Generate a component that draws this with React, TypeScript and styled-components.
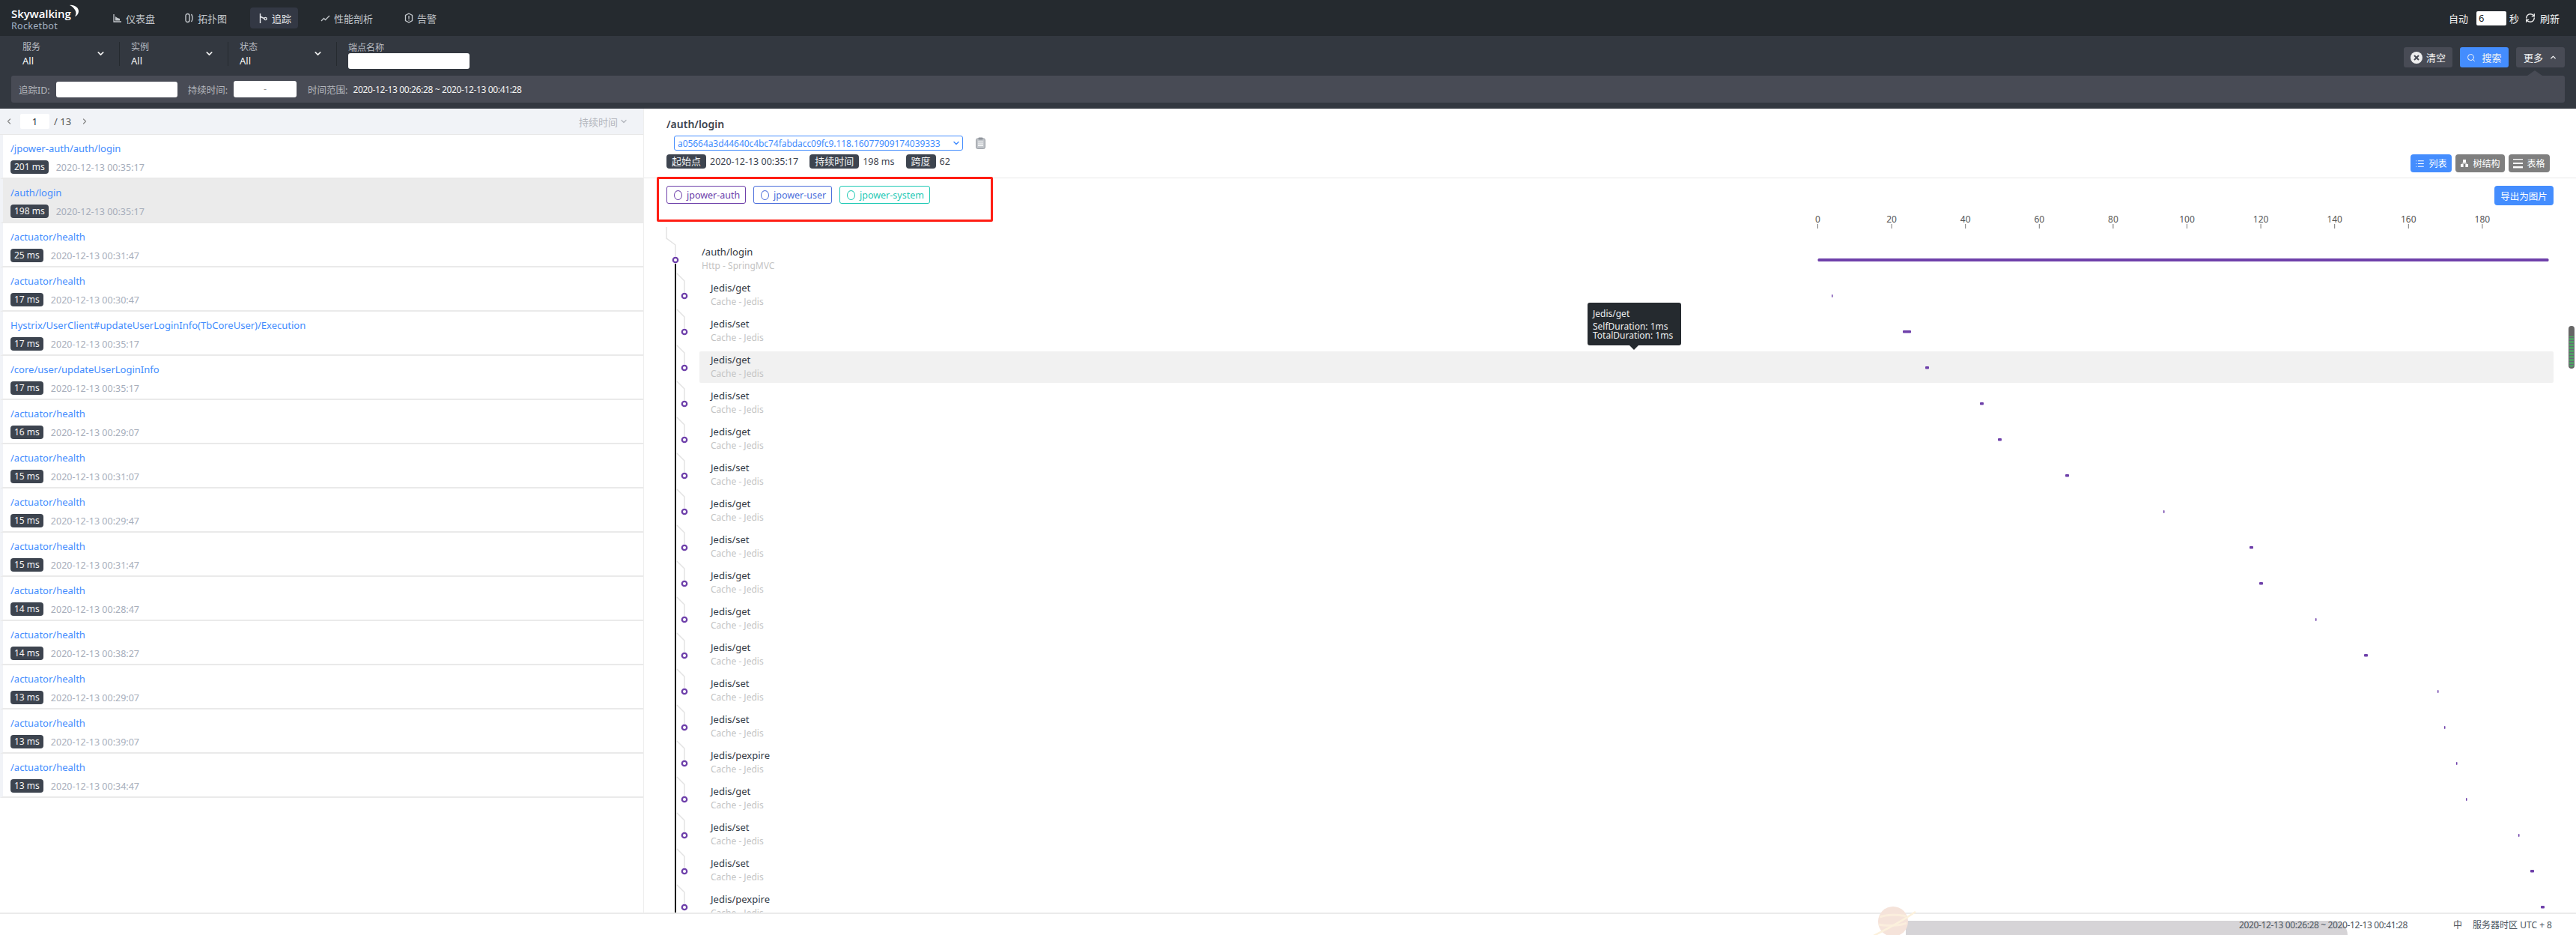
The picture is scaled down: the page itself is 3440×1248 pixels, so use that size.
import React from "react";
import styled, { createGlobalStyle } from "styled-components";
import { Search, RefreshCw, ChevronDown, ChevronUp, ChevronLeft, ChevronRight, List } from "lucide-react";

const Global = createGlobalStyle`
  html, body { margin: 0; padding: 0; background: #fff; }
  * { box-sizing: border-box; }
  body { font-family: "Noto Sans", "Noto Sans CJK SC", sans-serif; font-size: 12px; }
`;

const Page = styled.div`
  width: 3440px; height: 1248px; display: flex; flex-direction: column; overflow: hidden; position: relative; color: #333;
`;

/* ---------- nav ---------- */
const Nav = styled.header`
  height: 48px; flex: none; background: #252a2f; display: flex; align-items: center; padding: 0 22px 0 15px; color: #c3c7cc;
`;
const Logo = styled.div`
  width: 121px; flex: none; display: flex; flex-direction: column; position: relative; margin-top: 2px;
`;
const LogoMain = styled.span`
  font-family: "Open Sans", sans-serif; font-size: 15px; line-height: 19px; font-weight: 600; color: #fff; letter-spacing: -.1px;
`;
const LogoSub = styled.span`
  font-size: 12.5px; line-height: 14px; color: #a4b3c4; letter-spacing: .3px;
`;
const Crescent = styled.svg`
  position: absolute; left: 77px; top: -3px;
`;
const NavItems = styled.nav`
  display: flex; align-items: center; flex: 1; margin-left: 4px;
`;
const NavItem = styled.a<{ $active?: boolean; $w: number }>`
  width: ${p => p.$w}px; height: 28px; display: flex; align-items: center; gap: 5px; padding-left: 11px; font-size: 13px; border-radius: 4px; flex: none;
  margin-right: ${p => (p.$active ? 19 : 0)}px;
  background: ${p => (p.$active ? "#333844" : "transparent")};
  color: ${p => (p.$active ? "#e8eaed" : "#c3c7cc")};
`;
const AutoBox = styled.div`
  display: flex; align-items: center; font-size: 13px; color: #f2f2f2;
`;
const AutoInput = styled.div`
  width: 40px; height: 19px; margin: 0 4px 0 11px; background: #fff; border-radius: 2px; color: #222; padding-left: 3px; line-height: 19px; font-size: 13px;
`;
const Refresh = styled.span`
  display: flex; align-items: center; gap: 6px; margin-left: 8px;
`;

/* ---------- toolbar ---------- */
const Toolbar = styled.section`
  height: 97px; flex: none; background: #333840; display: flex; flex-direction: column; color: #efefef;
`;
const FilterRow = styled.div`
  height: 53px; flex: none; display: flex; padding: 8px 15px 0 15px; align-items: flex-start;
`;
const FilterCol = styled.div`
  width: 145px; height: 32px; border-right: 1px solid #252a2f; padding-left: 15px; position: relative; display: flex; flex-direction: column; flex: none;
`;
const FilterLabel = styled.span`
  font-size: 12px; line-height: 14px; color: #b9bcc2;
`;
const FilterValue = styled.span`
  font-size: 13px; line-height: 20px; margin-top: 1px; color: #f3f3f3;
`;
const FilterChevron = styled.span`
  position: absolute; right: 18px; top: 9px; color: #eee; display: flex;
`;
const EndpointCol = styled.div`
  margin-left: 15px; display: flex; flex-direction: column; margin-top: 1px;
`;
const WhiteInput = styled.div<{ $w: number; $h?: number }>`
  width: ${p => p.$w}px; height: ${p => p.$h ?? 21}px; background: #fff; border-radius: 3px; color: #999; text-align: center; line-height: 22px;
`;
const ToolButtons = styled.div`
  margin-left: auto; display: flex; gap: 10px; margin-top: 7px;
`;
const ToolButton = styled.button<{ $bg: string; $gap: number }>`
  width: 65px; height: 27px; border: 0; border-radius: 3px; background: ${p => p.$bg}; color: #f4f4f4; display: flex; align-items: center; justify-content: center; gap: ${p => p.$gap}px; font: inherit; font-size: 13px; padding: 0;
`;
const ClearDot = styled.svg`flex: none;`;
const SubBar = styled.div`
  height: 36px; margin: 0 15px; background: #484b55; border-radius: 3px; display: flex; align-items: center; position: relative; padding-left: 10px; font-size: 12.5px;
  &::after {
    content: ""; position: absolute; right: 30px; top: -7px;
    border-left: 10px solid transparent; border-right: 10px solid transparent; border-bottom: 7px solid #484b55;
  }
`;
const SubLabel = styled.span<{ $ml?: number }>`
  color: #b4b6bc; margin-left: ${p => p.$ml ?? 0}px; margin-right: 8px; font-size: 12.5px;
`;
const SubInput = styled(WhiteInput)`margin-right: 0;`;
const TimeRange = styled.span`
  font-size: 12px; color: #f2f2f2; margin-left: -1px; letter-spacing: -.36px;
`;

/* ---------- main ---------- */
const Main = styled.main`
  flex: 1; display: flex; min-height: 0;
`;
const ListPane = styled.aside`
  width: 860px; flex: none; border-right: 1px solid #eee; display: flex; flex-direction: column;
`;
const Pager = styled.div`
  height: 35px; flex: none; background: #f1f3f7; display: flex; align-items: center; color: #666; padding: 0 20px 0 6px; border-bottom: 1px solid #e8e8e8;
`;
const PageInput = styled.div`
  width: 39px; height: 20px; background: #fff; border-radius: 2px; margin: 0 6px 0 9px; text-align: center; font-size: 13px; line-height: 20px; color: #333;
`;
const PageCount = styled.span`
  font-size: 13px; margin-right: 12px; color: #555;
`;
const SortBy = styled.span`
  margin-left: auto; display: flex; align-items: center; gap: 2px; color: #b3b6bd; font-size: 13px;
`;
const TraceItem = styled.div<{ $active?: boolean }>`
  height: 59px; flex: none; padding: 9px 0 0 10px; border-left: 4px solid #f1f3f7; border-bottom: 2px solid #eaeaea;
  background: ${p => (p.$active ? "#ebebeb" : "#fff")};
`;
const TraceLink = styled.div`
  font-size: 13px; line-height: 19px; color: #448dfe;
`;
const TraceMeta = styled.div`
  display: flex; align-items: center; gap: 10px; margin-top: 6px;
`;
const Tag = styled.span`
  background: #3d444f; color: #f5f5f5; border-radius: 4px; font-size: 12px; height: 18px; line-height: 18px; padding: 0 5px; flex: none;
`;
const MetaTag = styled(Tag)`
  font-size: 13px; height: 19px; line-height: 19px; padding: 0 7px;
`;
const TraceTime = styled.span`
  color: #a7aebb; font-size: 12.5px;
`;

const DetailPane = styled.div`
  flex: 1; min-width: 0; display: flex; flex-direction: column;
`;
const DetailHead = styled.div`
  height: 93px; flex: none; padding: 11px 35px 0 30px; border-bottom: 1px solid #e8e8e8; position: relative;
`;
const DetailTitle = styled.div`
  font-size: 14px; line-height: 20px; font-weight: 600; color: #3d444f;
`;
const IdRow = styled.div`
  display: flex; align-items: center; margin: 5px 0 0 10px; gap: 17px;
`;
const IdSelect = styled.div`
  width: 386px; height: 20px; border: 1px solid #448dfe; border-radius: 3px; color: #448dfe; display: flex; align-items: center; justify-content: space-between; padding: 0 2px 0 4px; font-size: 12px; letter-spacing: -.06px; white-space: nowrap;
`;
const MetaRow = styled.div`
  display: flex; align-items: center; margin-top: 5px; height: 19px;
`;
const MetaValue = styled.span`
  font-size: 12.5px; color: #3d444f; margin: 0 15px 0 5px;
`;
const ViewButtons = styled.div`
  position: absolute; right: 35px; top: 61px; display: flex; gap: 5px;
`;
const ViewButton = styled.button<{ $active?: boolean; $w: number }>`
  width: ${p => p.$w}px; height: 24px; border: 0; border-radius: 4px; padding: 0; background: ${p => (p.$active ? "#448dfe" : "#7f7f7f")}; color: #fff; display: flex; align-items: center; justify-content: center; gap: 5px; font: inherit; font-size: 12px;
`;
const ChipRow = styled.div`
  height: 47px; flex: none; display: flex; align-items: flex-start; gap: 10px; padding: 10px 30px 0 30px; position: relative;
`;
const Chip = styled.span<{ $c: string; $w: number }>`
  width: ${p => p.$w}px; height: 24px; border: 1px solid ${p => p.$c}; color: ${p => p.$c}; border-radius: 3px; display: flex; align-items: center; padding-left: 9px; gap: 6px; font-size: 12.5px; background: #fff; flex: none;
`;
const ChipRing = styled.i<{ $c: string }>`
  width: 11px; height: 13px; border: 1.5px solid ${p => p.$c}; border-radius: 50%; flex: none; display: block;
`;
const RedBox = styled.div`
  position: absolute; left: 17px; top: -2px; width: 449px; height: 60px; border: 3px solid #ff1e14; border-radius: 2px; pointer-events: none;
`;
const ExportButton = styled.button`
  margin-left: auto; width: 79px; height: 26px; border: 0; border-radius: 4px; background: #448dfe; color: #fff; font: inherit; font-size: 12.5px; padding: 0; flex: none;
`;
const Tree = styled.div`
  flex: 1; position: relative; overflow: hidden; padding-top: 40px; min-height: 0;
`;
const ChartLayer = styled.svg`
  position: absolute; left: 0; top: 0; pointer-events: none; overflow: visible;
`;
const SpanRow = styled.div<{ $hl?: boolean; $indent: number }>`
  margin: 0 30px 6px 74px; height: 42px; padding: 1px 0 0 ${p => p.$indent}px; border-radius: 2px; flex: none;
  background: ${p => (p.$hl ? "#f1f1f1" : "transparent")};
`;
const SpanName = styled.div`
  font-size: 13px; line-height: 20px; color: #333a45;
`;
const SpanType = styled.div`
  font-size: 12px; line-height: 17px; color: #c4c4c4;
`;
const Tooltip = styled.div`
  position: absolute; left: 1260px; top: 119px; width: 125px; height: 57px; background: #252a2f; color: #eee; border-radius: 3px; padding: 6px 7px; font-size: 12px; line-height: 12px;
  &::after {
    content: ""; position: absolute; left: 56px; bottom: -6px;
    border-left: 6px solid transparent; border-right: 6px solid transparent; border-top: 6px solid #252a2f;
  }
`;
const TipTitle = styled.div`line-height: 18px; margin-bottom: 2px;`;

/* ---------- footer ---------- */
const Footer = styled.footer`
  height: 30px; flex: none; border-top: 2px solid #ebebeb; display: flex; align-items: center; justify-content: flex-end; padding-right: 32px; position: relative; font-size: 12px; color: #4c5560; background: #fff;
`;
const GreyStrip = styled.div`
  position: absolute; left: 2545px; top: 9px; width: 590px; height: 19px; background: #d6d4d7; border-top-right-radius: 18px 19px;
`;
const Planet = styled.svg`
  position: absolute; left: 2498px; top: -10px;
`;
const FooterText = styled.span<{ $mr?: number; $tight?: boolean }>`
  position: relative; margin-right: ${p => p.$mr ?? 0}px; letter-spacing: ${p => (p.$tight ? "-.36px" : "0")};
`;
const ScrollWidget = styled.div`
  position: absolute; left: 3430px; top: 435px; width: 8px; height: 57px; border-radius: 4px; background: #666; padding: 14px 1px 2px;
`;
const ScrollFill = styled.div`
  height: 100%; border-radius: 0 0 3px 3px;
  background: repeating-linear-gradient(to bottom, #46b65c 0 1px, #667 1px 2px);
`;

/* ---------- icons ---------- */
const DashIcon = () => (
  <svg width="12" height="12" viewBox="0 0 12 12" fill="none"><path d="M1 1v10h10" stroke="#c3c7cc" strokeWidth="1.3" /><path d="M3 9.5V4l3 2 3 1v2.5z" fill="#c3c7cc" /></svg>
);
const TopoIcon = () => (
  <svg width="12" height="14" viewBox="0 0 12 14" fill="none" stroke="#c3c7cc" strokeWidth="1.4"><rect x="1" y="1.5" width="5" height="11" rx="2.5" /><path d="M8.5 2c2 2.5 2 7.5 0 10" /></svg>
);
const TraceIcon = () => (
  <svg width="13" height="15" viewBox="0 0 13 15" fill="none" stroke="#e8eaed" strokeWidth="1.4"><path d="M2.5 1v13M2.5 5l5 2.5" /><circle cx="9.5" cy="8" r="1.6" /></svg>
);
const PerfIcon = () => (
  <svg width="13" height="11" viewBox="0 0 13 11" fill="none" stroke="#c3c7cc" strokeWidth="1.3"><path d="M1 9l3.5-3.5 2 2L12 2" /></svg>
);
const AlertIcon = () => (
  <svg width="12" height="14" viewBox="0 0 12 14" fill="none" stroke="#c3c7cc" strokeWidth="1.3"><path d="M6 1l4.5 2.5v7L6 13l-4.5-2.5v-7z" /><path d="M6 4v4M6 9.2v1.2" /></svg>
);
const ClipIcon = () => (
  <svg width="13" height="16" viewBox="0 0 13 16" fill="none"><rect x=".7" y="2" width="11.6" height="13.3" rx="1.5" fill="#c2c6cb" stroke="#8f949b" /><rect x="3.5" y=".5" width="6" height="3" rx="1" fill="#8f949b" /><path d="M3 6.5h7M3 9h7M3 11.5h7" stroke="#fff" /></svg>
);
const TreeIcon = () => (
  <svg width="12" height="12" viewBox="0 0 12 12" fill="#fff"><rect x="4" y="1" width="4" height="4" /><rect x="1" y="7" width="3.6" height="4" /><rect x="7.4" y="7" width="3.6" height="4" /><path d="M2.5 6h7" stroke="#fff" /></svg>
);
const TableIcon = () => (
  <svg width="13" height="14" viewBox="0 0 13 14" fill="#fff"><rect y="1" width="13" height="1.3" /><rect y="6" width="13" height="2" /><rect y="11" width="13" height="2.4" /></svg>
);

/* ---------- data ---------- */
const traces: [string, number, string][] = [
  ["/jpower-auth/auth/login", 201, "00:35:17"],
  ["/auth/login", 198, "00:35:17"],
  ["/actuator/health", 25, "00:31:47"],
  ["/actuator/health", 17, "00:30:47"],
  ["Hystrix/UserClient#updateUserLoginInfo(TbCoreUser)/Execution", 17, "00:35:17"],
  ["/core/user/updateUserLoginInfo", 17, "00:35:17"],
  ["/actuator/health", 16, "00:29:07"],
  ["/actuator/health", 15, "00:31:07"],
  ["/actuator/health", 15, "00:29:47"],
  ["/actuator/health", 15, "00:31:47"],
  ["/actuator/health", 14, "00:28:47"],
  ["/actuator/health", 14, "00:38:27"],
  ["/actuator/health", 13, "00:29:07"],
  ["/actuator/health", 13, "00:39:07"],
  ["/actuator/health", 13, "00:34:47"],
];

// [name, bar x on page, bar width]
const spans: [string, number, number][] = [
  ["Jedis/get", 2446, 1.5], ["Jedis/set", 2541, 11], ["Jedis/get", 2571, 5], ["Jedis/set", 2644, 5],
  ["Jedis/get", 2668, 5], ["Jedis/set", 2758, 5], ["Jedis/get", 2889, 1.5], ["Jedis/set", 3004, 5],
  ["Jedis/get", 3017, 5], ["Jedis/get", 3092, 1.5], ["Jedis/get", 3157, 5], ["Jedis/set", 3255, 1.5],
  ["Jedis/set", 3264, 1.5], ["Jedis/pexpire", 3280, 1.5], ["Jedis/get", 3293, 1.5], ["Jedis/set", 3363, 1.5],
  ["Jedis/set", 3379, 5], ["Jedis/pexpire", 3393, 5],
];

const PURPLE = "#6e40aa";
const AX0 = 2427.5 - 860;
const AXU = 4.93;
const ticks = Array.from({ length: 10 }, (_, i) => i * 20);
const rowY = (i: number) => 62 + 48 * i; // dot y inside tree

export default function App() {
  return (
    <Page>
      <Global />
      <Nav>
        <Logo>
          <LogoMain>Skywalking</LogoMain>
          <LogoSub>Rocketbot</LogoSub>
          <Crescent width="14" height="17" viewBox="0 0 14 17"><path d="M1 1c6-1 12 3 12 8 0 3-2 6-5 7 2-3 2-6 0-9-2-3-4-5-7-6z" fill="#fff" /></Crescent>
        </Logo>
        <NavItems>
          <NavItem $w={96}><DashIcon />仪表盘</NavItem>
          <NavItem $w={98}><TopoIcon />拓扑图</NavItem>
          <NavItem $w={64} $active><TraceIcon />追踪</NavItem>
          <NavItem $w={112}><PerfIcon />性能剖析</NavItem>
          <NavItem $w={70}><AlertIcon />告警</NavItem>
        </NavItems>
        <AutoBox>
          自动<AutoInput>6</AutoInput>秒
          <Refresh><RefreshCw size={14} strokeWidth={2.4} />刷新</Refresh>
        </AutoBox>
      </Nav>

      <Toolbar>
        <FilterRow>
          {["服务", "实例", "状态"].map(l => (
            <FilterCol key={l}>
              <FilterLabel>{l}</FilterLabel>
              <FilterValue>All</FilterValue>
              <FilterChevron><ChevronDown size={13} strokeWidth={3} /></FilterChevron>
            </FilterCol>
          ))}
          <EndpointCol>
            <FilterLabel>端点名称</FilterLabel>
            <WhiteInput $w={162} />
          </EndpointCol>
          <ToolButtons>
            <ToolButton $bg="#484b55" $gap={5}>
              <ClearDot width="16" height="16" viewBox="0 0 16 16"><circle cx="8" cy="8" r="8" fill="#eee" /><path d="M5 5l6 6M11 5l-6 6" stroke="#484b55" strokeWidth="2" /></ClearDot>
              清空
            </ToolButton>
            <ToolButton $bg="#448dfe" $gap={8}><Search size={12} strokeWidth={2} />搜索</ToolButton>
            <ToolButton $bg="#484b55" $gap={8}>更多<ChevronUp size={11} strokeWidth={3} /></ToolButton>
          </ToolButtons>
        </FilterRow>
        <SubBar>
          <SubLabel>追踪ID:</SubLabel>
          <SubInput $w={162} />
          <SubLabel $ml={14}>持续时间:</SubLabel>
          <SubInput $w={84} $h={22}>-</SubInput>
          <SubLabel $ml={15}>时间范围:</SubLabel>
          <TimeRange>2020-12-13 00:26:28 ~ 2020-12-13 00:41:28</TimeRange>
        </SubBar>
      </Toolbar>

      <Main>
        <ListPane>
          <Pager>
            <ChevronLeft size={12} color="#888" strokeWidth={2.5} />
            <PageInput>1</PageInput>
            <PageCount>/ 13</PageCount>
            <ChevronRight size={12} color="#888" strokeWidth={2.5} />
            <SortBy>持续时间<ChevronDown size={12} strokeWidth={2.5} /></SortBy>
          </Pager>
          {traces.map(([name, ms, time], i) => (
            <TraceItem key={i} $active={i === 1}>
              <TraceLink>{name}</TraceLink>
              <TraceMeta>
                <Tag>{ms} ms</Tag>
                <TraceTime>2020-12-13 {time}</TraceTime>
              </TraceMeta>
            </TraceItem>
          ))}
        </ListPane>

        <DetailPane>
          <DetailHead>
            <DetailTitle>/auth/login</DetailTitle>
            <IdRow>
              <IdSelect>
                a05664a3d44640c4bc74fabdacc09fc9.118.16077909174039333
                <ChevronDown size={12} strokeWidth={3} />
              </IdSelect>
              <ClipIcon />
            </IdRow>
            <MetaRow>
              <MetaTag>起始点</MetaTag><MetaValue>2020-12-13 00:35:17</MetaValue>
              <MetaTag>持续时间</MetaTag><MetaValue>198 ms</MetaValue>
              <MetaTag>跨度</MetaTag><MetaValue>62</MetaValue>
            </MetaRow>
            <ViewButtons>
              <ViewButton $active $w={55}><List size={13} strokeWidth={2} />列表</ViewButton>
              <ViewButton $w={66}><TreeIcon />树结构</ViewButton>
              <ViewButton $w={55}><TableIcon />表格</ViewButton>
            </ViewButtons>
          </DetailHead>

          <ChipRow>
            <Chip $c={PURPLE} $w={106}><ChipRing $c={PURPLE} />jpower-auth</Chip>
            <Chip $c="#4c6edb" $w={105}><ChipRing $c="#4c6edb" />jpower-user</Chip>
            <Chip $c="#1fc9b4" $w={121}><ChipRing $c="#1fc9b4" />jpower-system</Chip>
            <RedBox />
            <ExportButton>导出为图片</ExportButton>
          </ChipRow>

          <Tree>
            <SpanRow $indent={3}>
              <SpanName>/auth/login</SpanName>
              <SpanType>Http - SpringMVC</SpanType>
            </SpanRow>
            {spans.map(([name], i) => (
              <SpanRow key={i} $indent={15} $hl={i === 2}>
                <SpanName>{name}</SpanName>
                <SpanType>Cache - Jedis</SpanType>
              </SpanRow>
            ))}

            <ChartLayer width="2580" height="933">
              {ticks.map(t => (
                <g key={t}>
                  <text x={AX0 + t * AXU} y={12} fontSize="12" fill="#555" textAnchor="middle" fontFamily="Noto Sans, sans-serif">{t}</text>
                  <path d={`M${AX0 + t * AXU} 14v6`} stroke="#777" />
                </g>
              ))}
              {/* root connector */}
              <path d="M30 18v15l12 9v15" fill="none" stroke="#e3e3e3" strokeWidth="1.5" />
              {/* trunk */}
              <path d="M42 67V933" stroke="#111" strokeWidth="2" />
              {spans.map((_, i) => {
                const y = rowY(i + 1);
                return <path key={i} d={`M44 ${y - 30}l10 10v15`} fill="none" stroke="#e3e3e3" strokeWidth="1.5" />;
              })}
              <circle cx="42" cy={rowY(0)} r="3.2" fill="#fff" stroke={PURPLE} strokeWidth="2.3" />
              {spans.map((_, i) => (
                <circle key={i} cx="54" cy={rowY(i + 1)} r="3.2" fill="#fff" stroke={PURPLE} strokeWidth="2.3" />
              ))}
              <rect x={AX0} y={60} width={976} height={4} rx="1.5" fill={PURPLE} />
              {spans.map(([, x, w], i) => (
                <rect key={i} x={x - 860} y={rowY(i + 1) - 2} width={w} height={w < 2 ? 4 : 3.5} rx="1" fill={PURPLE} />
              ))}
            </ChartLayer>

            <Tooltip>
              <TipTitle>Jedis/get</TipTitle>
              <div>SelfDuration: 1ms</div>
              <div>TotalDuration: 1ms</div>
            </Tooltip>
          </Tree>
        </DetailPane>
      </Main>

      <Footer>
        <GreyStrip />
        <Planet width="64" height="40" viewBox="0 0 64 40">
          <circle cx="30" cy="20" r="20" fill="#f5e3da" />
          <path d="M12 14c8-3 26-4 35-1M11 24c8 2 28 2 37-2" stroke="#fbeedd" strokeWidth="3" fill="none" />
          <path d="M2 40C18 32 44 18 60 7" stroke="#fcf1dc" strokeWidth="2.5" fill="none" />
        </Planet>
        <FooterText $mr={61} $tight>2020-12-13 00:26:28 ~ 2020-12-13 00:41:28</FooterText>
        <FooterText $mr={14}>中</FooterText>
        <FooterText>服务器时区 UTC + 8</FooterText>
      </Footer>

      <ScrollWidget><ScrollFill /></ScrollWidget>
    </Page>
  );
}
